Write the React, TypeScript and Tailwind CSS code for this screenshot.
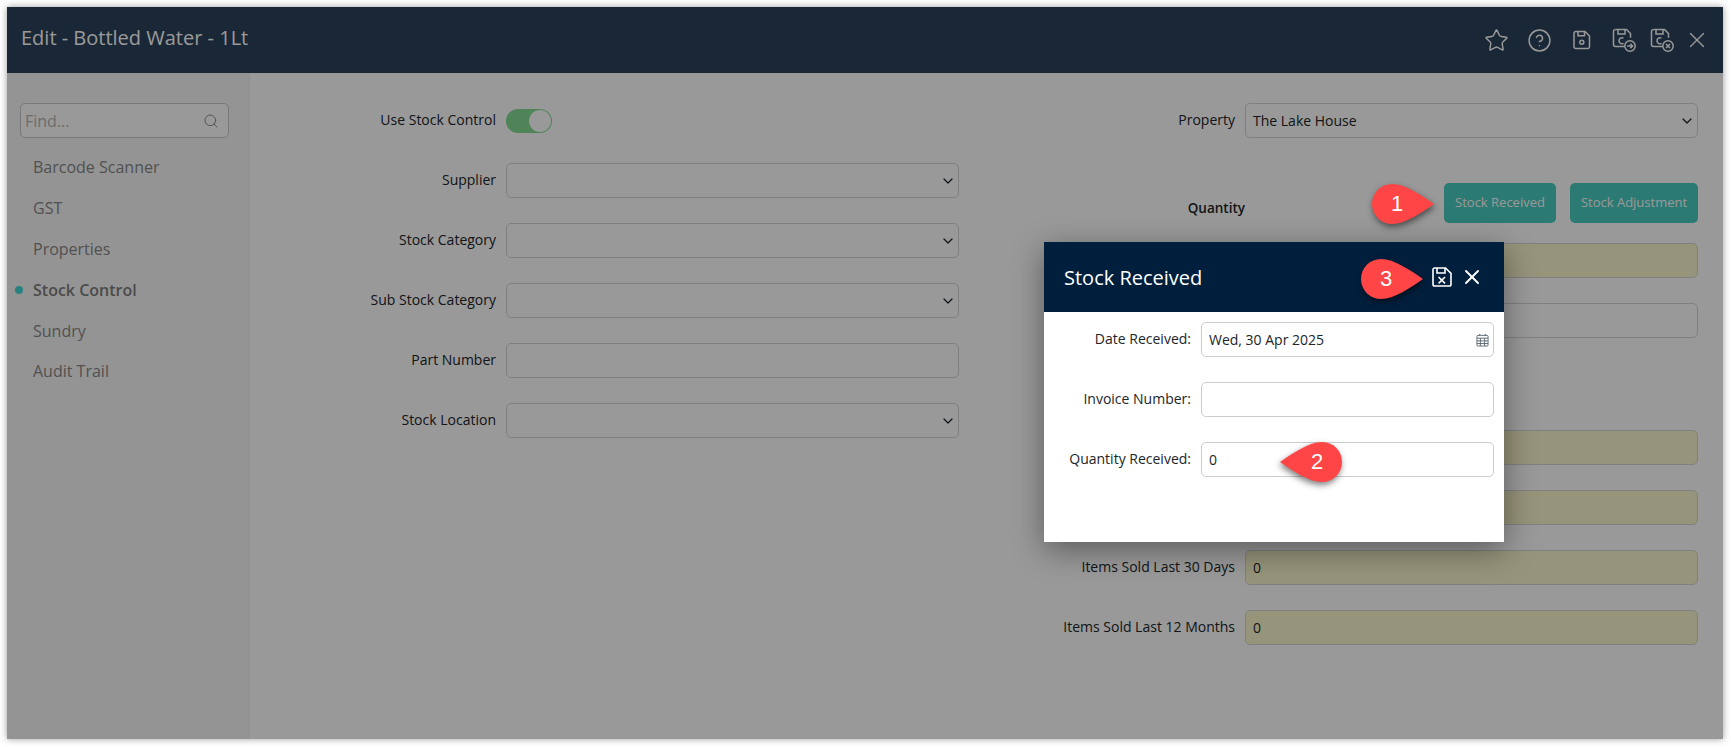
// App.tsx
import React from 'react';
import { Star, CircleHelp, ChevronDown, Search, X } from 'lucide-react';

const FONT = "font-['Open_Sans',sans-serif]";

const navItems = ['Barcode Scanner', 'GST', 'Properties', 'Stock Control', 'Sundry', 'Audit Trail'];

const FloppyBase: React.FC = () => (
  <>
    <path d="M3.5 1.5h11l4 4v4.2" />
    <path d="M3.5 1.5a2 2 0 0 0-2 2v13a2 2 0 0 0 2 2h9" />
    <path d="M6 1.5v4.5h7V1.5" />
    <path d="M11.5 10.2a3 3 0 1 0 0 5.2" />
  </>
);

const CopySaveGo: React.FC = () => (
  <svg viewBox="0 0 24 24" className="w-6 h-6" fill="none" stroke="currentColor" strokeWidth="1.5">
    <FloppyBase />
    <circle cx="18" cy="18" r="5.2" />
    <path d="M15.2 18h5.4M18.4 15.8l2.2 2.2-2.2 2.2" />
  </svg>
);

const CopySaveCancel: React.FC = () => (
  <svg viewBox="0 0 24 24" className="w-6 h-6" fill="none" stroke="currentColor" strokeWidth="1.5">
    <FloppyBase />
    <circle cx="18" cy="18" r="5.2" />
    <path d="M16 16l4 4M20 16l-4 4" />
  </svg>
);

const SaveIcon: React.FC = () => (
  <svg viewBox="0 0 18 20" className="w-[18px] h-5" fill="none" stroke="currentColor" strokeWidth="1.5">
    <path d="M2.8 1.5h9.2l4.5 4.5v10.7a1.8 1.8 0 0 1-1.8 1.8H2.8A1.8 1.8 0 0 1 1 16.7V3.3a1.8 1.8 0 0 1 1.8-1.8z" />
    <path d="M5 1.5v4.3h6.5V1.5" />
    <circle cx="8.8" cy="12.2" r="2" />
  </svg>
);

const SaveCancelIcon: React.FC = () => (
  <svg viewBox="0 0 20 20" className="w-5 h-5" fill="none" stroke="currentColor" strokeWidth="1.6">
    <path d="M2.8 1h10.7L19 6.3v10.9a1.8 1.8 0 0 1-1.8 1.8H2.8A1.8 1.8 0 0 1 1 17.2V2.8A1.8 1.8 0 0 1 2.8 1z" />
    <path d="M5 1v5h8V1" />
    <path d="M6.6 10l6.4 6.4M13 10l-6.4 6.4" />
  </svg>
);

const CalendarIcon: React.FC = () => (
  <svg viewBox="0 0 14 14" className="w-[13px] h-[14px]" fill="none" stroke="#5b6670" strokeWidth="1">
    <rect x="1" y="2" width="12" height="11.5" rx="1.2" />
    <path d="M1 5h12M1 8h12M1 10.8h12M4.7 5v8.5M9.3 5v8.5M4 .5v2M10 .5v2" />
  </svg>
);

const Field: React.FC<{ value?: string; yellow?: boolean; select?: boolean; className?: string }> = ({ value = '', yellow, select, className = '' }) => (
  <div className={`relative h-[35px] flex items-center rounded-[5px] border border-[#d6d6d6] px-[7px] text-sm text-[#212529] ${yellow ? 'bg-[#faf7cb]' : 'bg-white'} ${className}`}>
    {value}
    {select && <ChevronDown className="absolute right-[2px] top-[9px] w-4 h-4 text-[#212529]" strokeWidth={1.9} />}
  </div>
);

const Row: React.FC<{ label: string; labelWidth: string; children: React.ReactNode; className?: string }> = ({ label, labelWidth, children, className = '' }) => (
  <div className={`flex items-center gap-[10px] ${className}`}>
    <div className={`${labelWidth} text-right text-sm text-[#212529] -mt-[2px]`}>{label}</div>
    <div className="w-[453px]">{children}</div>
  </div>
);

const Callout: React.FC<{ num: string; flip?: boolean; className: string }> = ({ num, flip, className }) => (
  <div className={`absolute z-30 w-[62px] h-10 ${className}`}>
    <svg viewBox="0 0 62 40" className={`w-[62px] h-10 overflow-visible drop-shadow-[1px_3px_3px_rgba(0,0,0,0.5)] ${flip ? '-scale-x-100' : ''}`}>
      <path d="M20 0C33 0 49 11 62 20C49 29 33 40 20 40A20 20 0 0 1 20 0Z" fill="#ff4545" />
    </svg>
    <span className={`absolute top-0 h-10 leading-10 text-[22px] text-white font-['Liberation_Sans',sans-serif] text-center w-[50px] ${flip ? 'right-0' : 'left-0'}`}>{num}</span>
  </div>
);

export default function App() {
  return (
    <div className={`h-[747px] w-[1731px] bg-white p-[7px] pr-2 ${FONT}`}>
      <div className="relative h-[732px] w-[1716px] overflow-hidden bg-white shadow-[0_0_7px_rgba(0,0,0,0.4)] flex flex-col">
        <header className="h-[66px] shrink-0 bg-[#2b415a] text-white flex items-center pl-[14px] pr-[13px]">
          <h1 className="text-xl flex-1 -mt-[4px]">Edit - Bottled Water - 1Lt</h1>
          <Star className="w-[25px] h-[25px]" strokeWidth={1.4} />
          <CircleHelp className="w-[25px] h-[25px] ml-[18px]" strokeWidth={1.4} />
          <span className="ml-[21px]"><SaveIcon /></span>
          <span className="ml-[21px]"><CopySaveGo /></span>
          <span className="ml-[14px]"><CopySaveCancel /></span>
          <X className="w-[26px] h-[26px] ml-[10px]" strokeWidth={1.3} />
        </header>

        <div className="flex flex-1">
          <aside className="w-[243px] shrink-0 bg-[#f7f7f7] border-r border-[#f0f0f0] pt-[30px] pl-[13px]">
            <div className="relative w-[209px] h-[35px] rounded-[5px] border border-[#c8c8c8] bg-white px-1 flex items-center text-base text-[#b5b5b5]">
              Find...
              <Search className="absolute right-[9px] top-[9px] w-4 h-4 text-[#8a8a8a]" strokeWidth={1.5} />
            </div>
            <nav className="mt-[9px]">
              {navItems.map((item) => (
                <div key={item} className={`relative h-[40.8px] flex items-center pl-[13px] text-base ${item === 'Stock Control' ? 'font-semibold text-[#7e7e7e]' : 'text-[#888888]'}`}>
                  {item === 'Stock Control' && <span className="absolute left-[-5px] top-[17px] w-2 h-2 rounded-full bg-[#46d8d8]" />}
                  {item}
                </div>
              ))}
            </nav>
          </aside>

          <main className="flex flex-1 pt-[30px]">
            <section className="w-[709px] flex flex-col gap-[25px]">
              <Row label="Use Stock Control" labelWidth="w-[246px]">
                <div className="h-[35px] flex items-center">
                  <div className="relative w-[46px] h-6 rounded-full bg-[#84dd93]">
                    <span className="absolute right-[1px] top-[1px] w-[22px] h-[22px] rounded-full bg-white" />
                  </div>
                </div>
              </Row>
              <Row label="Supplier" labelWidth="w-[246px]"><Field select /></Row>
              <Row label="Stock Category" labelWidth="w-[246px]"><Field select /></Row>
              <Row label="Sub Stock Category" labelWidth="w-[246px]"><Field select /></Row>
              <Row label="Part Number" labelWidth="w-[246px]"><Field /></Row>
              <Row label="Stock Location" labelWidth="w-[246px]"><Field select /></Row>
            </section>

            <section className="w-[739px] flex flex-col">
              <Row label="Property" labelWidth="w-[276px]"><Field value="The Lake House" select /></Row>
              <div className="mt-[45px] h-10 flex items-center">
                <div className="w-[286px] text-right text-[13.5px] font-semibold text-[#212529] mt-[10px]">Quantity</div>
                <div className="w-[453px] flex justify-end gap-[14px] text-[13px] text-white">
                  <button className="w-[112px] h-10 rounded-[5px] bg-[#49cbc0]">Stock Received</button>
                  <button className="w-[128px] h-10 rounded-[5px] bg-[#49cbc0]">Stock Adjustment</button>
                </div>
              </div>
              <div className="mt-5 ml-[286px] w-[453px]"><Field yellow /></div>
              <div className="mt-[25px] ml-[286px] w-[453px]"><Field /></div>
              <div className="mt-[92px] ml-[286px] w-[453px]"><Field yellow /></div>
              <div className="mt-[25px] ml-[286px] w-[453px]"><Field yellow /></div>
              <Row label="Items Sold Last 30 Days" labelWidth="w-[276px]" className="mt-[25px]"><Field value="0" yellow /></Row>
              <Row label="Items Sold Last 12 Months" labelWidth="w-[276px]" className="mt-[25px]"><Field value="0" yellow /></Row>
            </section>
          </main>
        </div>

        {/* dim layer behind the dialog */}
        <div className="absolute inset-0 z-10 bg-black/40" />

        <div className="absolute left-[1037px] top-[235px] z-20 w-[460px] h-[300px] bg-white shadow-[0_8px_30px_rgba(0,0,0,0.4)]">
          <div className="h-[70px] bg-[#001f3d] text-white flex items-center pl-5 pr-5">
            <h2 className="text-xl flex-1 mt-[1px]">Stock Received</h2>
            <SaveCancelIcon />
            <X className="w-6 h-6 ml-2" strokeWidth={2} />
          </div>
          <div className="pt-[10px] pr-[10px] flex flex-col gap-[25px] text-sm text-[#212529]">
            <div className="flex items-center gap-[10px]">
              <div className="w-[147px] text-right -mt-[2px]">Date Received:</div>
              <div className="relative flex-1 h-[35px] flex items-center rounded-[5px] border border-[#ccc] px-[7px]">
                Wed, 30 Apr 2025
                <span className="absolute right-[4px] top-[10px]"><CalendarIcon /></span>
              </div>
            </div>
            <div className="flex items-center gap-[10px]">
              <div className="w-[147px] text-right -mt-[2px]">Invoice Number:</div>
              <div className="flex-1 h-[35px] rounded-[5px] border border-[#ccc]" />
            </div>
            <div className="flex items-center gap-[10px]">
              <div className="w-[147px] text-right -mt-[2px]">Quantity Received:</div>
              <div className="flex-1 h-[35px] flex items-center rounded-[5px] border border-[#ccc] px-[7px]">0</div>
            </div>
          </div>
        </div>

        <Callout num="1" className="left-[1365px] top-[177px]" />
        <Callout num="3" className="left-[1354px] top-[252px]" />
        <Callout num="2" flip className="left-[1273px] top-[435px]" />
      </div>
    </div>
  );
}
